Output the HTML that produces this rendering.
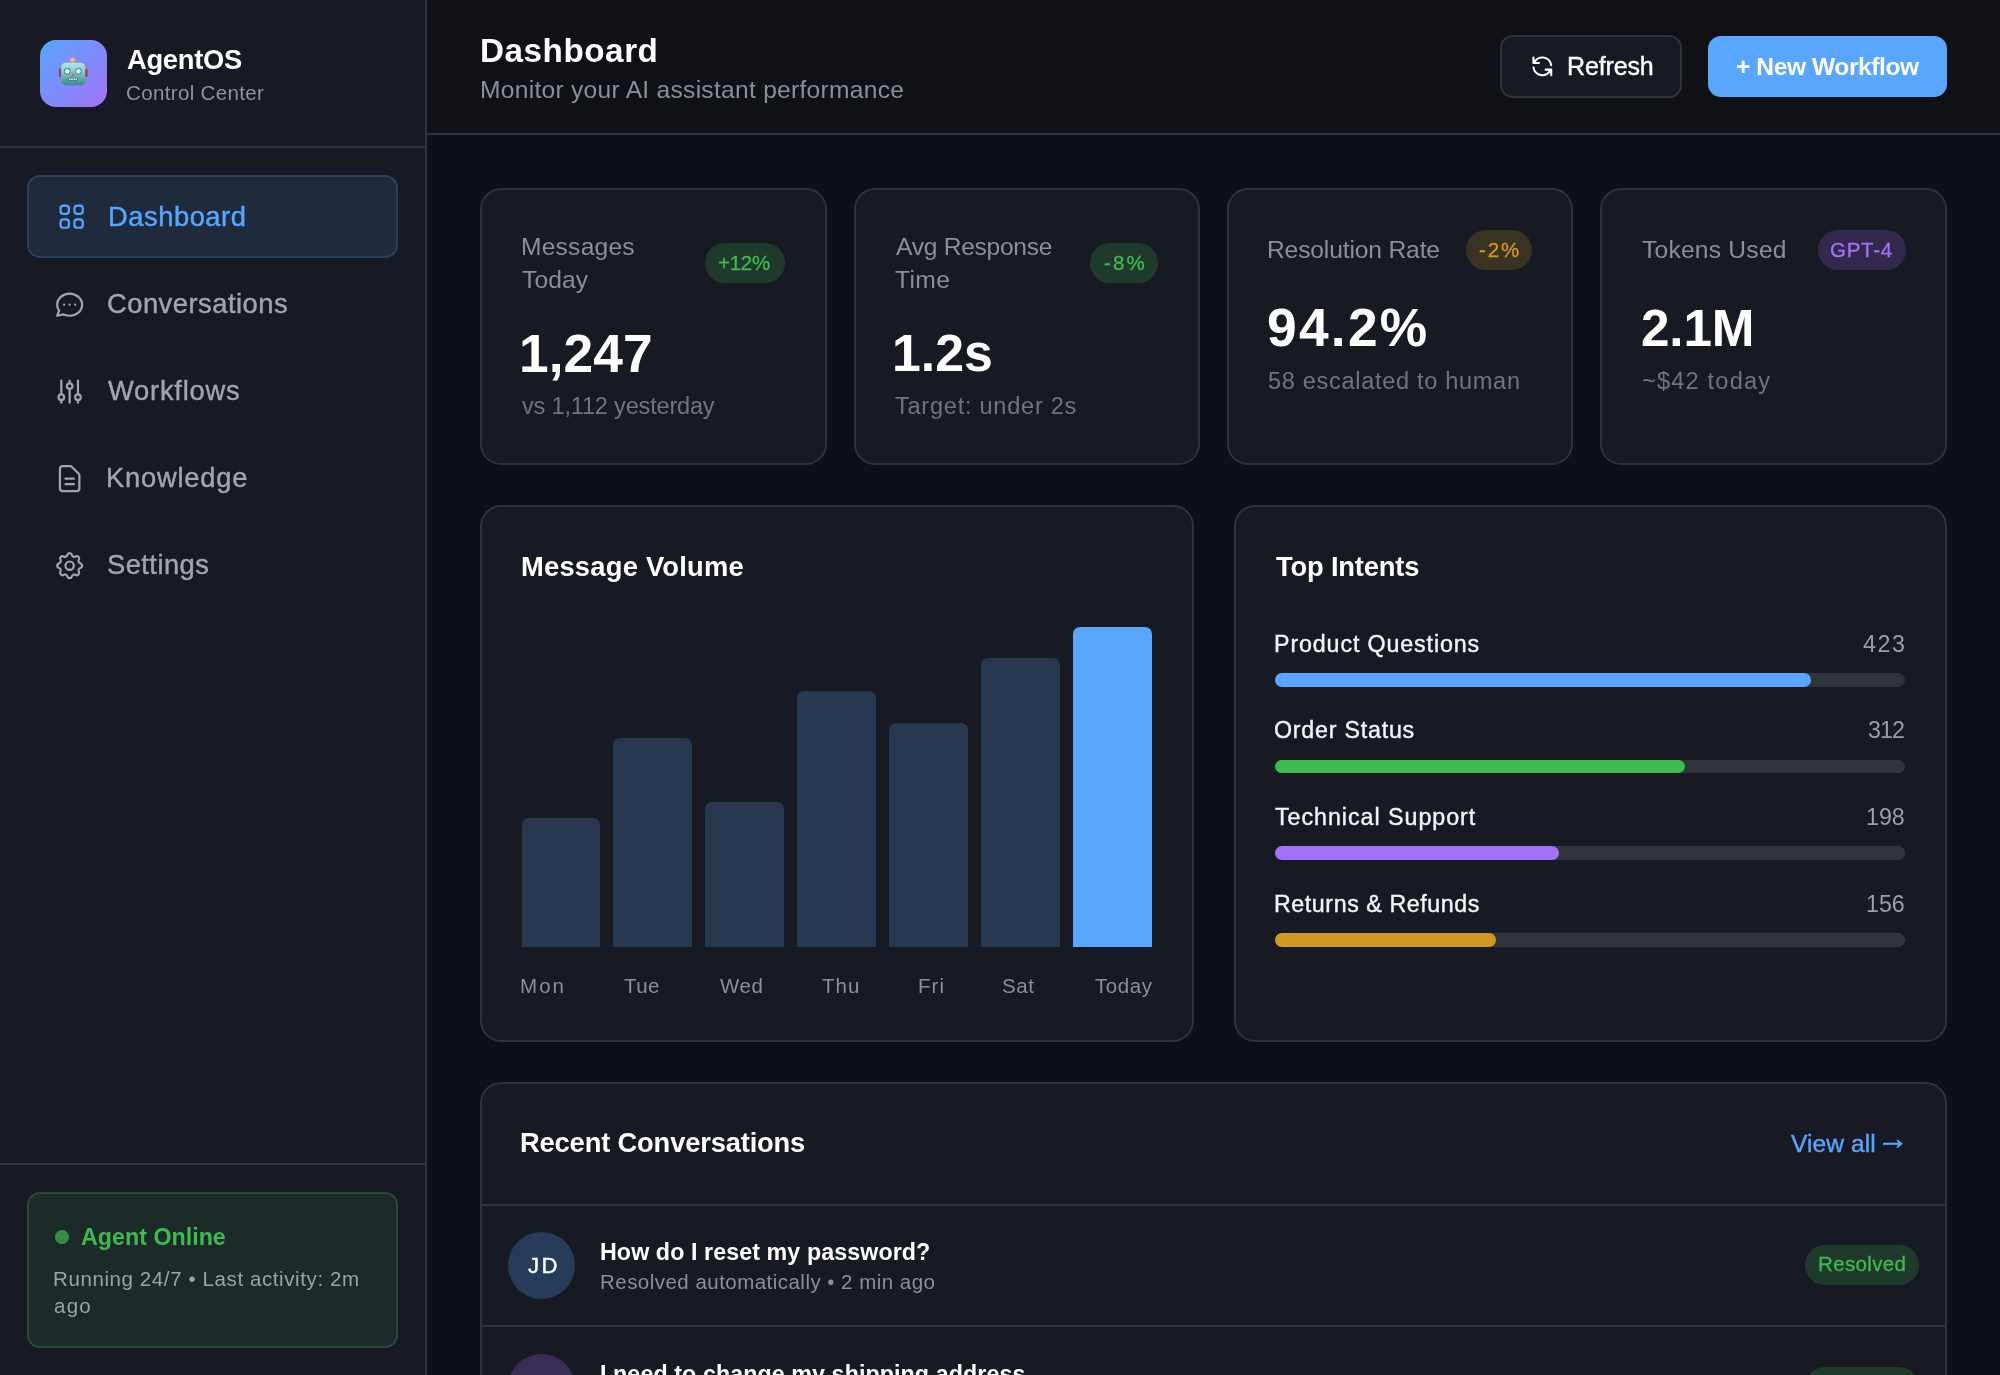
<!DOCTYPE html>
<html lang="en"><head><meta charset="utf-8"><title>AgentOS Control Center – Dashboard</title>
<style>
*{box-sizing:border-box;margin:0;padding:0}
html,body{width:2000px;height:1375px;overflow:hidden}
body{position:relative;background:#0d1018;font-family:"Liberation Sans",sans-serif;color:#fff;-webkit-font-smoothing:antialiased}
aside,header,main,nav,section,article,footer,div,a,button,h1,h2,h3,p,ul,li{position:absolute;display:block;list-style:none}
button{font:inherit;color:inherit;background:none;border:0}
a{text-decoration:none}
.t{will-change:transform;position:absolute;white-space:nowrap;font-weight:normal}
.ic{position:absolute;display:block;overflow:visible}
.card{background:#181a23;border:2px solid #2f323b;border-radius:21px}
.pill{position:absolute;display:block;border-radius:999px}
</style></head>
<body>
<aside style="left:0.0px;top:0.0px;width:427px;height:1375px;background:#171a23;border-right:2px solid #2f323b">
<div class="brand" style="left:0px;top:0px;width:425px;height:148px;border-bottom:2px solid #2f323b">
<div class="logo" style="left:40px;top:40px;width:67px;height:67px;border-radius:16px;background:linear-gradient(135deg,#58a6ff 0%,#a371f7 100%)">
<svg class="ic" style="left:17px;top:16px;width:32px;height:32px" viewBox="0 0 32 32">
<defs><linearGradient id="rh" x1="0" y1="0" x2="0" y2="1"><stop offset="0" stop-color="#b8e6e6"/><stop offset="0.45" stop-color="#86c4c6"/><stop offset="1" stop-color="#3a8a8f"/></linearGradient>
<radialGradient id="rb" cx="0.4" cy="0.35" r="0.7"><stop offset="0" stop-color="#fbc9a0"/><stop offset="1" stop-color="#d98655"/></radialGradient></defs>
<rect x="13.9" y="5.8" width="4" height="2.4" rx="1" fill="#39424d"/>
<circle cx="15.9" cy="4.3" r="2.9" fill="url(#rb)"/>
<rect x="1.8" y="12.6" width="3.4" height="8.4" rx="1.5" fill="#9a4152"/>
<rect x="27.2" y="12.6" width="3.4" height="8.4" rx="1.5" fill="#9a4152"/>
<rect x="4.1" y="6.8" width="24.2" height="22.4" rx="4.6" fill="url(#rh)"/>
<circle cx="10.3" cy="15.2" r="3.4" fill="#3f9fab"/><circle cx="10.3" cy="15.2" r="2.2" fill="#e4fdff"/>
<circle cx="21.5" cy="15.2" r="3.4" fill="#3f9fab"/><circle cx="21.5" cy="15.2" r="2.2" fill="#e4fdff"/>
<path d="M15.9 16.4l1.9 3.9h-3.8z" fill="#d4606c"/>
<rect x="11" y="21.8" width="10" height="2.8" rx="0.8" fill="#2c666c"/>
<rect x="11.9" y="22.4" width="1.6" height="1.5" fill="#f6fdfd"/><rect x="14.1" y="22.4" width="1.6" height="1.5" fill="#f6fdfd"/><rect x="16.3" y="22.4" width="1.6" height="1.5" fill="#f6fdfd"/><rect x="18.5" y="22.4" width="1.6" height="1.5" fill="#f6fdfd"/>
</svg>
</div>
<h2 class="t" style="left:127px;top:42px;font-size:27.34px;line-height:36px;color:#fff;font-weight:bold;letter-spacing:-0.28px;">AgentOS</h2>
<p class="t" style="left:126px;top:79px;font-size:20.5px;line-height:27px;color:#8f939c;letter-spacing:0.35px;">Control Center</p>
</div>
<nav style="left:0px;top:148px;width:425px;height:700px;">
<a style="left:27px;top:27px;width:371px;height:83px;border-radius:13px;background:#1f2a3c;border:2px solid #2b405f;" href="#">
<svg class="ic" style="left:25.75px;top:22.60px;width:33.3px;height:33.3px" viewBox="0 0 24 24" fill="none" stroke="#58a6ff" stroke-width="1.6" stroke-linecap="round" stroke-linejoin="round"><path d="M4 6a2 2 0 012-2h2a2 2 0 012 2v2a2 2 0 01-2 2H6a2 2 0 01-2-2V6zM14 6a2 2 0 012-2h2a2 2 0 012 2v2a2 2 0 01-2 2h-2a2 2 0 01-2-2V6zM4 16a2 2 0 012-2h2a2 2 0 012 2v2a2 2 0 01-2 2H6a2 2 0 01-2-2v-2zM14 16a2 2 0 012-2h2a2 2 0 012 2v2a2 2 0 01-2 2h-2a2 2 0 01-2-2v-2z"/></svg>
<span class="t" style="left:79px;top:22px;font-size:27.34px;line-height:36px;color:#58a6ff;-webkit-text-stroke:0.4px #58a6ff;letter-spacing:0.53px;">Dashboard</span>
</a>
<a style="left:27px;top:115px;width:371px;height:81px;border-radius:13px;" href="#">
<svg class="ic" style="left:26.35px;top:24.80px;width:33.3px;height:33.3px" viewBox="0 0 24 24" fill="none" stroke="#a1a5ad" stroke-width="1.6" stroke-linecap="round" stroke-linejoin="round"><path d="M8 12h.01M12 12h.01M16 12h.01M21 12c0 4.418-4.03 8-9 8a9.863 9.863 0 01-4.255-.949L3 20l1.395-3.72C3.512 15.042 3 13.574 3 12c0-4.418 4.03-8 9-8s9 3.582 9 8z"/></svg>
<span class="t" style="left:80px;top:23px;font-size:27.34px;line-height:36px;color:#a1a5ad;-webkit-text-stroke:0.4px #a1a5ad;letter-spacing:0.49px;">Conversations</span>
</a>
<a style="left:27px;top:202px;width:371px;height:82px;border-radius:13px;" href="#">
<svg class="ic" style="left:26.35px;top:25.30px;width:33.3px;height:33.3px" viewBox="0 0 24 24" fill="none" stroke="#a1a5ad" stroke-width="1.6" stroke-linecap="round" stroke-linejoin="round"><path d="M12 6V4m0 2a2 2 0 100 4m0-4a2 2 0 110 4m-6 8a2 2 0 100-4m0 4a2 2 0 110-4m0 4v2m0-6V4m6 6v10m6-2a2 2 0 100-4m0 4a2 2 0 110-4m0 4v2m0-6V4"/></svg>
<span class="t" style="left:81px;top:23px;font-size:27.34px;line-height:36px;color:#a1a5ad;-webkit-text-stroke:0.4px #a1a5ad;letter-spacing:0.76px;">Workflows</span>
</a>
<a style="left:27px;top:289px;width:371px;height:82px;border-radius:13px;" href="#">
<svg class="ic" style="left:26.35px;top:25.05px;width:33.3px;height:33.3px" viewBox="0 0 24 24" fill="none" stroke="#a1a5ad" stroke-width="1.6" stroke-linecap="round" stroke-linejoin="round"><path d="M9 12h6m-6 4h6m2 5H7a2 2 0 01-2-2V5a2 2 0 012-2h5.586a1 1 0 01.707.293l5.414 5.414a1 1 0 01.293.707V19a2 2 0 01-2 2z"/></svg>
<span class="t" style="left:79px;top:23px;font-size:27.34px;line-height:36px;color:#a1a5ad;-webkit-text-stroke:0.4px #a1a5ad;letter-spacing:0.77px;">Knowledge</span>
</a>
<a style="left:27px;top:376px;width:371px;height:81px;border-radius:13px;" href="#">
<svg class="ic" style="left:26.35px;top:24.80px;width:33.3px;height:33.3px" viewBox="0 0 24 24" fill="none" stroke="#a1a5ad" stroke-width="1.6" stroke-linecap="round" stroke-linejoin="round"><path d="M10.325 4.317c.426-1.756 2.924-1.756 3.35 0a1.724 1.724 0 002.573 1.066c1.543-.94 3.31.826 2.37 2.37a1.724 1.724 0 001.065 2.572c1.756.426 1.756 2.924 0 3.35a1.724 1.724 0 00-1.066 2.573c.94 1.543-.826 3.31-2.37 2.37a1.724 1.724 0 00-2.572 1.065c-.426 1.756-2.924 1.756-3.35 0a1.724 1.724 0 00-2.573-1.066c-1.543.94-3.31-.826-2.37-2.37a1.724 1.724 0 00-1.065-2.572c-1.756-.426-1.756-2.924 0-3.35a1.724 1.724 0 001.066-2.573c-.94-1.543.826-3.31 2.37-2.37.996.608 2.296.07 2.572-1.065z"/><path d="M15 12a3 3 0 11-6 0 3 3 0 016 0z"/></svg>
<span class="t" style="left:80px;top:23px;font-size:27.34px;line-height:36px;color:#a1a5ad;-webkit-text-stroke:0.4px #a1a5ad;letter-spacing:0.45px;">Settings</span>
</a>
</nav>
<footer style="left:0px;top:1163px;width:425px;height:212px;border-top:2px solid #2f323b">
<div class="status" style="left:27px;top:27px;width:371px;height:156px;border-radius:13px;background:#1c2b2a;border:2px solid #274a36">
<span style="left:25.9px;top:36px;width:13.7px;height:13.7px;border-radius:50%;background:#3a8a47;position:absolute"></span>
<span class="t" style="left:52px;top:28px;font-size:23.24px;line-height:30px;color:#3fb950;font-weight:bold;letter-spacing:0.02px;">Agent Online</span>
<span class="t" style="left:24px;top:71px;font-size:20.5px;line-height:27px;color:#9da1a9;letter-spacing:0.60px;">Running 24/7 • Last activity: 2m</span>
<span class="t" style="left:25px;top:98px;font-size:20.5px;line-height:27px;color:#9da1a9;letter-spacing:1.26px;">ago</span>
</div>
</footer>
</aside>
<header style="left:427.0px;top:0.0px;width:1573px;height:135px;background:#101116;border-bottom:2px solid #2f323b">
<h1 class="t" style="left:53px;top:29px;font-size:33.21px;line-height:43px;color:#fff;font-weight:bold;letter-spacing:0.56px;">Dashboard</h1>
<p class="t" style="left:53px;top:74px;font-size:24.6px;line-height:32px;color:#8b8f98;letter-spacing:0.27px;">Monitor your AI assistant performance</p>
<button style="left:1073px;top:35px;width:182px;height:63px;border-radius:13px;background:#181a23;border:2px solid #2f323b">
<svg class="ic" style="left:26.96px;top:16.46px;width:26.67px;height:26.67px" viewBox="0 0 24 24" fill="none" stroke="#fff" stroke-width="1.9" stroke-linecap="round" stroke-linejoin="round"><path d="M4 4v5h.582m15.356 2A8.001 8.001 0 004.582 9m0 0H9m11 11v-5h-.581m0 0a8.003 8.003 0 01-15.357-2m15.357 2H15"/></svg>
<span class="t" style="left:65px;top:13px;font-size:25.01px;line-height:33px;color:#fff;-webkit-text-stroke:0.4px #fff;letter-spacing:-0.15px;">Refresh</span>
</button>
<button style="left:1281px;top:36px;width:239px;height:61px;border-radius:13px;background:#58a6ff">
<span class="t" style="left:28px;top:15px;font-size:24.6px;line-height:32px;color:#fff;font-weight:bold;letter-spacing:-0.43px;">+ New Workflow</span>
</button>
</header>
<main style="left:427.0px;top:135.0px;width:1573px;height:1240px;overflow:hidden">
<section class="card" style="left:53px;top:53px;width:347px;height:277px;">
<span class="t" style="left:39px;top:41px;font-size:24.6px;line-height:32px;color:#8b8f98;letter-spacing:0.22px;">Messages</span>
<span class="t" style="left:40px;top:74px;font-size:24.6px;line-height:32px;color:#8b8f98;letter-spacing:0.12px;">Today</span>
<span class="pill" style="left:223px;top:53px;width:80px;height:40px;background:#1f3a2b">
<span class="t" style="left:13px;top:6px;font-size:20.5px;line-height:27px;color:#3fb950;-webkit-text-stroke:0.3px #3fb950;letter-spacing:-0.26px;">+12%</span>
</span>
<span class="t" style="left:37px;top:129px;font-size:53.3px;line-height:69px;color:#fff;font-weight:bold;letter-spacing:0.08px;">1,247</span>
<span class="t" style="left:40px;top:201px;font-size:23.57px;line-height:31px;color:#70747e;letter-spacing:-0.20px;">vs 1,112 yesterday</span>
</section>
<section class="card" style="left:427px;top:53px;width:346px;height:277px;">
<span class="t" style="left:40px;top:41px;font-size:24.6px;line-height:32px;color:#8b8f98;letter-spacing:-0.28px;">Avg Response</span>
<span class="t" style="left:39px;top:74px;font-size:24.6px;line-height:32px;color:#8b8f98;letter-spacing:0.38px;">Time</span>
<span class="pill" style="left:234px;top:53px;width:68px;height:40px;background:#1f3a2b">
<span class="t" style="left:14px;top:6px;font-size:20.5px;line-height:27px;color:#3fb950;-webkit-text-stroke:0.3px #3fb950;letter-spacing:2.09px;">-8%</span>
</span>
<span class="t" style="left:36px;top:130px;font-size:51.76px;line-height:67px;color:#fff;font-weight:bold;letter-spacing:0.05px;">1.2s</span>
<span class="t" style="left:39px;top:201px;font-size:23.57px;line-height:31px;color:#70747e;letter-spacing:0.74px;">Target: under 2s</span>
</section>
<section class="card" style="left:800px;top:53px;width:346px;height:277px;">
<span class="t" style="left:38px;top:44px;font-size:24.6px;line-height:32px;color:#8b8f98;letter-spacing:-0.14px;">Resolution Rate</span>
<span class="pill" style="left:237px;top:40px;width:66px;height:40px;background:#3a3222">
<span class="t" style="left:13px;top:6px;font-size:20.5px;line-height:27px;color:#d29922;-webkit-text-stroke:0.3px #d29922;letter-spacing:1.84px;">-2%</span>
</span>
<span class="t" style="left:38px;top:103px;font-size:53.3px;line-height:69px;color:#fff;font-weight:bold;letter-spacing:2.28px;">94.2%</span>
<span class="t" style="left:39px;top:176px;font-size:23.57px;line-height:31px;color:#70747e;letter-spacing:0.68px;">58 escalated to human</span>
</section>
<section class="card" style="left:1173px;top:53px;width:347px;height:277px;">
<span class="t" style="left:40px;top:44px;font-size:24.6px;line-height:32px;color:#8b8f98;letter-spacing:0.23px;">Tokens Used</span>
<span class="pill" style="left:216px;top:40px;width:88px;height:40px;background:#33294f">
<span class="t" style="left:12px;top:6px;font-size:20.5px;line-height:27px;color:#a371f7;-webkit-text-stroke:0.3px #a371f7;letter-spacing:0.72px;">GPT-4</span>
</span>
<span class="t" style="left:39px;top:105px;font-size:51.25px;line-height:67px;color:#fff;font-weight:bold;letter-spacing:-0.14px;">2.1M</span>
<span class="t" style="left:40px;top:176px;font-size:23.57px;line-height:31px;color:#70747e;letter-spacing:1.20px;">~$42 today</span>
</section>
<section class="card" style="left:53px;top:370px;width:714px;height:537px;">
<h3 class="t" style="left:39px;top:42px;font-size:27.34px;line-height:36px;color:#fff;font-weight:bold;letter-spacing:0.23px;">Message Volume</h3>
<div class="bar" style="left:40px;top:311px;width:78px;height:129px;border-radius:7px 7px 0 0;background:#263850"></div>
<div class="bar" style="left:131px;top:231px;width:79px;height:209px;border-radius:7px 7px 0 0;background:#263850"></div>
<div class="bar" style="left:223px;top:295px;width:79px;height:145px;border-radius:7px 7px 0 0;background:#263850"></div>
<div class="bar" style="left:315px;top:184px;width:79px;height:256px;border-radius:7px 7px 0 0;background:#263850"></div>
<div class="bar" style="left:407px;top:216px;width:79px;height:224px;border-radius:7px 7px 0 0;background:#263850"></div>
<div class="bar" style="left:499px;top:151px;width:79px;height:289px;border-radius:7px 7px 0 0;background:#263850"></div>
<div class="bar" style="left:591px;top:120px;width:79px;height:320px;border-radius:7px 7px 0 0;background:#58a6ff"></div>
<span class="t" style="left:38px;top:465px;font-size:20.5px;line-height:27px;color:#8b8f98;letter-spacing:2.07px;">Mon</span>
<span class="t" style="left:142px;top:465px;font-size:20.5px;line-height:27px;color:#8b8f98;letter-spacing:0.41px;">Tue</span>
<span class="t" style="left:238px;top:465px;font-size:20.5px;line-height:27px;color:#8b8f98;letter-spacing:0.51px;">Wed</span>
<span class="t" style="left:340px;top:465px;font-size:20.5px;line-height:27px;color:#8b8f98;letter-spacing:1.05px;">Thu</span>
<span class="t" style="left:436px;top:465px;font-size:20.5px;line-height:27px;color:#8b8f98;letter-spacing:1.08px;">Fri</span>
<span class="t" style="left:520px;top:465px;font-size:20.5px;line-height:27px;color:#8b8f98;letter-spacing:0.56px;">Sat</span>
<span class="t" style="left:613px;top:465px;font-size:20.5px;line-height:27px;color:#8b8f98;letter-spacing:0.60px;">Today</span>
</section>
<section class="card" style="left:807px;top:370px;width:713px;height:537px;">
<h3 class="t" style="left:40px;top:42px;font-size:27.34px;line-height:36px;color:#fff;font-weight:bold;letter-spacing:-0.18px;">Top Intents</h3>
<span class="t" style="left:38px;top:122px;font-size:23.24px;line-height:30px;color:#f3f4f6;-webkit-text-stroke:0.4px #f3f4f6;letter-spacing:0.88px;">Product Questions</span>
<span class="t" style="left:627px;top:122px;font-size:23.24px;line-height:30px;color:#9a9ea6;letter-spacing:1.59px;">423</span>
<div class="pill" style="left:39px;top:166px;width:630px;height:14px;background:#30343d">
<div class="pill" style="left:0px;top:0px;width:536px;height:14px;background:#58a6ff"></div>
</div>
<span class="t" style="left:38px;top:208px;font-size:23.24px;line-height:30px;color:#f3f4f6;-webkit-text-stroke:0.4px #f3f4f6;letter-spacing:0.77px;">Order Status</span>
<span class="t" style="left:632px;top:208px;font-size:23.24px;line-height:30px;color:#9a9ea6;letter-spacing:-0.86px;">312</span>
<div class="pill" style="left:39px;top:253px;width:630px;height:13px;background:#30343d">
<div class="pill" style="left:0px;top:0px;width:410px;height:13px;background:#3fb950"></div>
</div>
<span class="t" style="left:39px;top:295px;font-size:23.24px;line-height:30px;color:#f3f4f6;-webkit-text-stroke:0.4px #f3f4f6;letter-spacing:0.97px;">Technical Support</span>
<span class="t" style="left:630px;top:295px;font-size:23.24px;line-height:30px;color:#9a9ea6;">198</span>
<div class="pill" style="left:39px;top:339px;width:630px;height:14px;background:#30343d">
<div class="pill" style="left:0px;top:0px;width:284px;height:14px;background:#a371f7"></div>
</div>
<span class="t" style="left:38px;top:382px;font-size:23.24px;line-height:30px;color:#f3f4f6;-webkit-text-stroke:0.4px #f3f4f6;letter-spacing:0.57px;">Returns &amp; Refunds</span>
<span class="t" style="left:630px;top:382px;font-size:23.24px;line-height:30px;color:#9a9ea6;letter-spacing:0.01px;">156</span>
<div class="pill" style="left:39px;top:426px;width:630px;height:14px;background:#30343d">
<div class="pill" style="left:0px;top:0px;width:221px;height:14px;background:#d29922"></div>
</div>
</section>
<section class="card" style="left:53px;top:947px;width:1467px;height:420px;overflow:hidden">
<h3 class="t" style="left:38px;top:41px;font-size:27.34px;line-height:36px;color:#fff;font-weight:bold;letter-spacing:-0.17px;">Recent Conversations</h3>
<a style="left:1303px;top:41px;width:125px;height:40px;" href="#">
<span class="t" style="left:6px;top:3px;font-size:24.6px;line-height:32px;color:#58a6ff;-webkit-text-stroke:0.4px #58a6ff;letter-spacing:0.06px;">View all</span>
<span class="t" style="left:92px;top:-8px;font-size:31.98px;line-height:42px;color:#58a6ff;-webkit-text-stroke:0.6px #58a6ff;">→</span>
</a>
<div style="left:0px;top:120px;width:1463px;height:2px;background:#2f323b"></div>
<article style="left:0px;top:122px;width:1463px;height:120px;">
<div class="avatar" style="left:26px;top:26px;width:67px;height:67px;border-radius:50%;background:#273c58"></div>
<span class="t" style="left:46px;top:45px;font-size:22.14px;line-height:29px;color:#fff;-webkit-text-stroke:0.4px #fff;letter-spacing:2.35px;">JD</span>
<span class="t" style="left:118px;top:31px;font-size:23.24px;line-height:30px;color:#fff;font-weight:bold;letter-spacing:0.09px;">How do I reset my password?</span>
<span class="t" style="left:118px;top:62px;font-size:20.5px;line-height:27px;color:#8b8f98;letter-spacing:0.47px;">Resolved automatically • 2 min ago</span>
<span class="pill" style="left:1323px;top:39px;width:114px;height:40px;background:#1f3a2b">
<span class="t" style="left:13px;top:5px;font-size:20.5px;line-height:27px;color:#3fb950;-webkit-text-stroke:0.3px #3fb950;letter-spacing:0.36px;">Resolved</span>
</span>
</article>
<div style="left:0px;top:241px;width:1463px;height:2px;background:#2f323b"></div>
<article style="left:0px;top:243px;width:1463px;height:120px;">
<div class="avatar" style="left:26px;top:27px;width:67px;height:66px;border-radius:50%;background:#392d56"></div>
<span class="t" style="left:43px;top:47px;font-size:21.86px;line-height:28px;color:#fff;-webkit-text-stroke:0.4px #fff;letter-spacing:0.98px;">SM</span>
<span class="t" style="left:118px;top:32px;font-size:23.24px;line-height:30px;color:#fff;font-weight:bold;letter-spacing:0.09px;">I need to change my shipping address</span>
<span class="t" style="left:118px;top:62px;font-size:20.5px;line-height:27px;color:#8b8f98;letter-spacing:0.34px;">Updated order #4821 • 8 min ago</span>
<span class="pill" style="left:1323px;top:40px;width:114px;height:40px;background:#1f3a2b">
<span class="t" style="left:13px;top:5px;font-size:20.5px;line-height:27px;color:#3fb950;-webkit-text-stroke:0.3px #3fb950;letter-spacing:0.36px;">Resolved</span>
</span>
</article>
</section>
</main>
</body></html>
